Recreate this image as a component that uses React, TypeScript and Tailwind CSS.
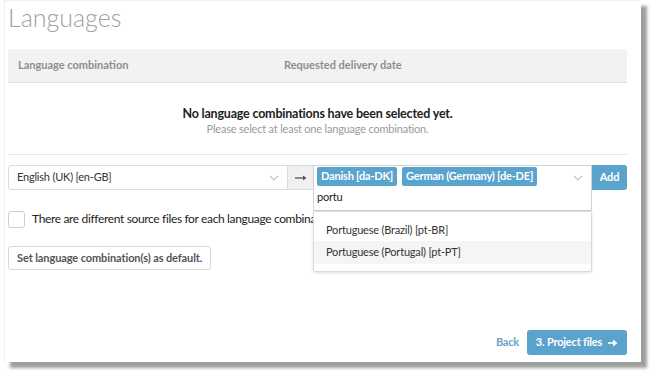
import React from "react";

function Chevron() {
  return (
    <svg width="10" height="6" viewBox="0 0 10 6" fill="none">
      <path d="M1 1l4 4 4-4" stroke="#c4c4c4" strokeWidth="1.2" />
    </svg>
  );
}

export default function App() {
  const font = { fontFamily: "Lato, 'Noto Sans', sans-serif" };
  return (
    <div className="w-[654px] h-[375px] bg-white overflow-hidden" style={font}>
      <div className="ml-[4px] w-[637px] h-[362px] bg-white border-l border-t border-[#f0f0f0] shadow-[6px_6px_3px_rgba(0,0,0,0.38)] flex flex-col pl-[3px] pr-[14px] tracking-[-0.2px]">
        <h1 className="text-[25px] font-light text-[#a0a0a0] leading-none pt-[4px] tracking-[0px]">Languages</h1>
        <div className="mt-[19px] h-[34px] bg-[#f2f2f2] border-b border-[#e2e2e2] flex items-center text-[11px] font-bold text-[#8e8e8e]">
          <div className="pl-[10px] w-[276px] tracking-[0px]">Language combination</div>
          <div className="tracking-[0px]">Requested delivery date</div>
        </div>
        <div className="flex flex-col items-center pt-[23px] h-[72px] border-b border-[#e6e6e6]">
          <div className="text-[12.5px] font-bold text-[#222] leading-[16px]">No language combinations have been selected yet.</div>
          <div className="text-[11px] text-[#9a9a9a] leading-[14px]">Please select at least one language combination.</div>
        </div>
        <div className="relative mt-[10px] flex items-start">
          <div className="w-[280px] h-[25px] border border-[#dcdcdc] rounded-l-[3px] flex items-center justify-between pl-[8px] pr-[8px] text-[11px] text-[#333]">
            <span>English (UK) [en-GB]</span>
            <Chevron />
          </div>
          <div className="w-[25px] h-[25px] bg-[#f0f0f0] border-y border-[#dcdcdc] flex items-center justify-center">
            <svg width="12" height="6" viewBox="0 0 12 6"><path d="M0 3h9" stroke="#555" strokeWidth="1.3" /><path d="M8 0.5l3.5 2.5L8 5.5z" fill="#555" /></svg>
          </div>
          <div className="w-[279px] h-[46px] border border-[#d2d2d2] flex flex-col">
            <div className="flex items-center gap-[5px] pl-[3px] pt-[1px] pr-[8px]">
              <span className="h-[19px] px-[4px] bg-[#5aa3cc] text-white text-[11px] font-bold flex items-center rounded-[2px]">Danish [da-DK]</span>
              <span className="h-[19px] px-[4px] bg-[#5aa3cc] text-white text-[11px] font-bold flex items-center rounded-[2px]">German (Germany) [de-DE]</span>
              <span className="ml-auto mt-[2px]"><Chevron /></span>
            </div>
            <div className="pl-[3px] pt-[3px] text-[11px] text-[#222]">portu</div>
          </div>
          <div className="w-[35px] h-[25px] bg-[#5aa3cc] rounded-r-[3px] text-white text-[11px] font-bold flex items-center justify-center">Add</div>
          <div className="absolute left-[305px] top-[46px] w-[279px] h-[61px] bg-white border border-[#dadada] rounded-[2px] shadow-[0_1px_3px_rgba(0,0,0,0.12)] pt-[7px] text-[11px] text-[#333] z-10">
            <div className="h-[22px] flex items-center pl-[12px]">Portuguese (Brazil) [pt-BR]</div>
            <div className="h-[23px] flex items-center pl-[12px] bg-[#f5f5f5]">Portuguese (Portugal) [pt-PT]</div>
          </div>
        </div>
        <div className="mt-[-1px] flex items-center gap-[7px]">
          <div className="w-[17px] h-[17px] border border-[#cfcfcf] rounded-[3px] bg-white" />
          <span className="text-[12px] text-[#222] whitespace-nowrap tracking-[-0.35px]">There are different source files for each language combination.</span>
        </div>
        <div className="mt-[16px]">
          <div className="inline-flex items-center h-[24px] px-[8px] border border-[#d9d9d9] rounded-[3px] text-[11px] font-bold text-[#555] tracking-[-0.1px]">Set language combination(s) as default.</div>
        </div>
        <div className="mt-auto mb-[7px] flex items-center justify-end gap-[8px]">
          <span className="text-[11px] font-bold text-[#6ea4c3]">Back</span>
          <div className="h-[25px] w-[100px] bg-[#5aa3cc] rounded-[3px] text-white text-[11px] font-bold flex items-center justify-center gap-[6px]">
            3. Project files
            <svg width="10" height="8" viewBox="0 0 10 8"><path d="M0 4h6" stroke="#fff" strokeWidth="1.6" /><path d="M5 0.5l4.5 3.5L5 7.5z" fill="#fff" /></svg>
          </div>
        </div>
      </div>
    </div>
  );
}
